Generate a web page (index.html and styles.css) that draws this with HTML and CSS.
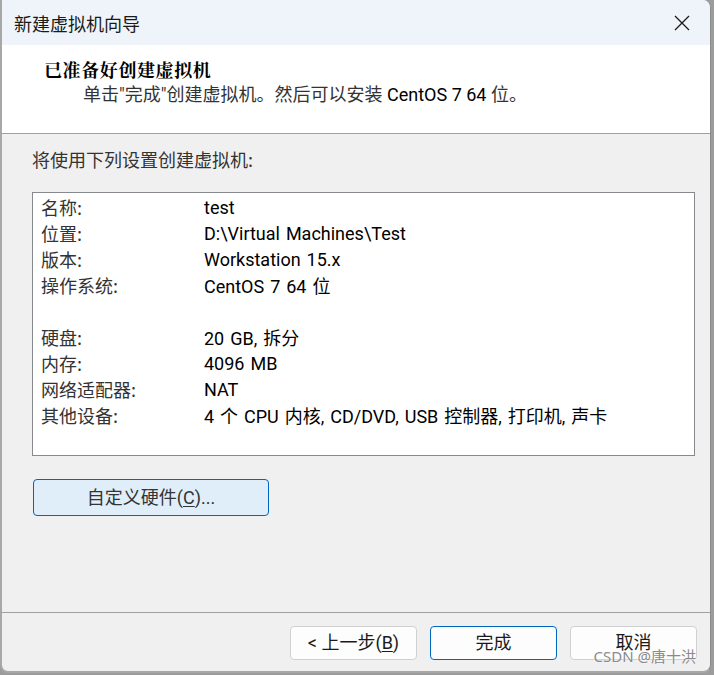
FILE: index.html
```html
<!DOCTYPE html>
<html lang="zh-CN">
<head>
<meta charset="utf-8">
<title>新建虚拟机向导</title>
<link rel="stylesheet" href="styles.css">
</head>
<body>
<div class="window">
  <div class="titlebar">
    <span class="title">新建虚拟机向导</span>
    <svg class="close" width="16" height="16" viewBox="0 0 16 16"><path d="M1 1L15 15M15 1L1 15" stroke="#1a1a1a" stroke-width="1.3" fill="none"/></svg>
  </div>
  <div class="header">
    <div class="heading">已准备好创建虚拟机</div>
    <div class="subtext">单击"完成"创建虚拟机。然后可以安装 <span class="lat">CentOS 7 64</span> 位。</div>
  </div>
  <div class="content">
    <div class="intro">将使用下列设置创建虚拟机:</div>
    <div class="listbox">
      <div class="row"><span class="k">名称:</span><span class="v">test</span></div>
      <div class="row"><span class="k">位置:</span><span class="v">D:\Virtual Machines\Test</span></div>
      <div class="row"><span class="k">版本:</span><span class="v">Workstation 15.x</span></div>
      <div class="row"><span class="k">操作系统:</span><span class="v">CentOS 7 64 位</span></div>
      <div class="row blank"></div>
      <div class="row"><span class="k">硬盘:</span><span class="v">20 GB, 拆分</span></div>
      <div class="row"><span class="k">内存:</span><span class="v">4096 MB</span></div>
      <div class="row"><span class="k">网络适配器:</span><span class="v">NAT</span></div>
      <div class="row"><span class="k">其他设备:</span><span class="v">4 个 CPU 内核, CD/DVD, USB 控制器, 打印机, 声卡</span></div>
    </div>
    <div class="custom-row">
      <button class="btn custom">自定义硬件(<u>C</u>)...</button>
    </div>
  </div>
  <div class="footer">
    <button class="btn">&lt; 上一步(<u>B</u>)</button>
    <button class="btn primary">完成</button>
    <button class="btn">取消</button>
    <span class="watermark">CSDN @唐十洪</span>
  </div>
</div>
</body>
</html>
```
FILE: styles.css
```css
html, body {
  margin: 0;
  padding: 0;
  background: #9c9c9c;
}
body {
  width: 714px;
  height: 675px;
  overflow: hidden;
  font-family: "Roboto", "Noto Sans CJK SC", sans-serif;
  color: #1a1a1a;
}
.window {
  width: 711px;
  height: 673px;
  box-sizing: border-box;
  border-left: 2px solid #a8a8a8;
  border-right: 1px solid #8c8c8c;
  border-bottom: 2px solid #a8a8a8;
  border-radius: 0 8px 8px 8px;
  background: #f0f0f0;
  display: flex;
  flex-direction: column;
  overflow: hidden;
  position: relative;
}
.titlebar {
  height: 45px;
  background: #eef4f9;
  display: flex;
  align-items: center;
  justify-content: space-between;
  padding: 0 20px 0 12px;
  flex: none;
}
.title {
  font-family: "Noto Sans CJK SC", sans-serif;
  font-size: 18px;
  color: #1a1a1a;
}
.close { display: block; }
.header {
  height: 89px;
  background: #ffffff;
  border-bottom: 1px solid #a0a0a0;
  padding: 12px 0 0 42px;
  box-sizing: border-box;
  flex: none;
}
.heading {
  font-family: "Noto Serif CJK SC", "Noto Sans CJK SC", serif;
  font-weight: bold;
  font-size: 18px;
  letter-spacing: 0.6px;
  line-height: 24px;
  color: #000;
}
.subtext {
  font-family: "Roboto", "Noto Sans CJK SC", sans-serif;
  font-size: 18px;
  line-height: 28px;
  padding-left: 39px;
  color: #333;
}
.lat { color: #000; }
.content {
  flex: 1;
  padding: 12px 15px 0 30px;
}
.intro {
  font-family: "Noto Sans CJK SC", sans-serif;
  font-size: 18px;
  line-height: 26px;
  color: #333;
}
.listbox {
  margin-top: 20px;
  height: 264px;
  box-sizing: border-box;
  background: #fff;
  border: 1px solid #868a8e;
  padding: 1px 0 0 8px;
}
.row {
  display: flex;
  height: 26px;
  align-items: center;
  font-size: 18px;
}
.k {
  width: 163px;
  flex: none;
  font-family: "Noto Sans CJK SC", sans-serif;
  color: #333;
}
.v {
  font-family: "Roboto", "Noto Sans CJK SC", sans-serif;
  color: #000;
  word-spacing: 1.5px;
}
.custom-row {
  margin-top: 23px;
}
.btn {
  font-family: "Roboto", "Noto Sans CJK SC", sans-serif;
  font-size: 18px;
  color: #1a1a1a;
  background: #fdfdfd;
  border: 1px solid #d0d0d0;
  border-radius: 4px;
  width: 127px;
  height: 34px;
  padding: 0;
  line-height: 1;
}
.btn u { text-underline-offset: 2px; }
.custom {
  margin-left: 1px;
  width: 236px;
  height: 37px;
  background: #e0eef9;
  border-color: #0067c0;
  color: #333;
}
.primary {
  border-color: #0067c0;
}
.footer {
  flex: none;
  height: 59px;
  border-top: 1px solid #a0a0a0;
  display: flex;
  justify-content: flex-end;
  gap: 13px;
  padding: 13px 13px 0 0;
  box-sizing: border-box;
  position: relative;
}
.watermark {
  position: absolute;
  right: 14px;
  bottom: 5px;
  font-family: "Noto Sans", "Noto Sans CJK SC", sans-serif;
  font-size: 15px;
  color: #8a8a8a;
  text-shadow: 0 0 2px #fff;
}
```
